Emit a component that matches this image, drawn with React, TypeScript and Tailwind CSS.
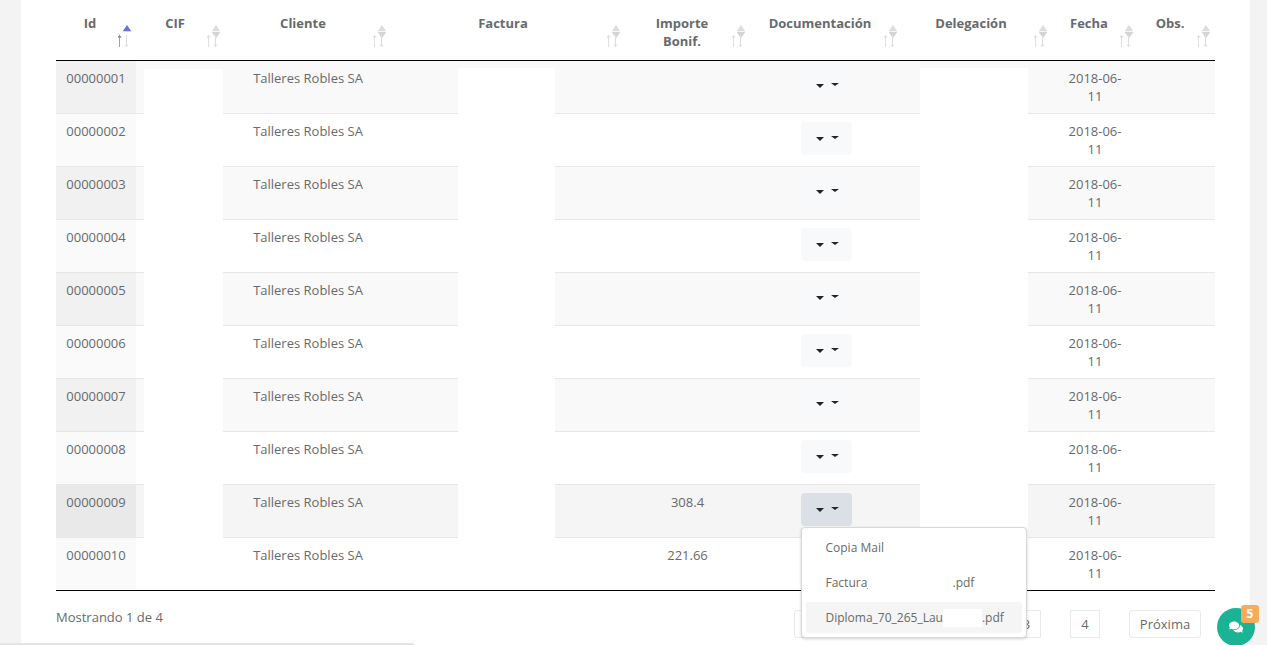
import React from "react";
import { FaComments } from "react-icons/fa";

const COLS = "grid-cols-[80px_89px_166px_234px_125px_152px_150px_86px_77px]";

function SortIcon({ active }: { active?: boolean }) {
  return (
    <svg width="14" height="24" viewBox="0 0 14 24" className="absolute right-[4px] top-[24px]">
      <path d="M4.7 7.2 L9 1 L13.3 7.2 Z" fill={active ? "#6a6fdc" : "#dcdcdc"} />
      {!active && <path d="M4.7 8 L13.3 8 L9 14.2 Z" fill="#d4d4d4" />}
      <path d="M1.5 23 V12" stroke={active ? "#a0a0a0" : "#e0e0e0"} strokeWidth="1" fill="none" />
      <path d="M0 13.7 L1.5 11.5 L3 13.7" stroke={active ? "#666" : "#d8d8d8"} strokeWidth="1" fill="none" />
      <path d="M8.5 11 V22.5 M7 20.5 L8.5 22.5 L10 20.5" stroke="#dedede" strokeWidth="1" fill="none" />
    </svg>
  );
}

const headers: { label: React.ReactNode; cls: string; active?: boolean }[] = [
  { label: "Id", cls: "pr-[12px]", active: true },
  { label: "CIF", cls: "pr-[11px]" },
  { label: "Cliente", cls: "pr-[10px]" },
  { label: "Factura", cls: "pr-[10px]" },
  { label: (<>Importe<br />Bonif.</>), cls: "pr-[11px]" },
  { label: "Documentación", cls: "pr-[12px]" },
  { label: "Delegación", cls: "pr-[12px]" },
  { label: "Fecha", cls: "pr-[12px]" },
  { label: "Obs.", cls: "pr-[13px]" },
];

const rows = [
  { id: "00000001", imp: "" },
  { id: "00000002", imp: "" },
  { id: "00000003", imp: "" },
  { id: "00000004", imp: "" },
  { id: "00000005", imp: "" },
  { id: "00000006", imp: "" },
  { id: "00000007", imp: "" },
  { id: "00000008", imp: "" },
  { id: "00000009", imp: "308.4" },
  { id: "00000010", imp: "221.66" },
];

function DocButton({ open }: { open?: boolean }) {
  return (
    <div
      className={
        "flex h-[33px] w-[51px] justify-center rounded-[4px] pl-[2px] pt-[14px] " +
        (open ? "bg-[#dae0e5]" : "bg-[#f8f9fa]")
      }
    >
      <span className="mr-[7px] mt-[1px] h-0 w-0 border-x-4 border-t-4 border-x-transparent border-t-[#212529]" />
      <span className="h-0 w-0 border-x-4 border-t-[3px] border-x-transparent border-t-[#212529]" />
    </div>
  );
}

function Menu() {
  return (
    <div className="absolute left-0 top-[34px] z-20 h-[111px] w-[226px] rounded-[4px] border border-[#d8d8d8] bg-white px-[4px] pt-[4px] text-[12px] shadow-[0_1px_3px_rgba(0,0,0,0.18)]">
      <div className="mb-1 flex h-[31px] items-center pl-[20px]">Copia Mail</div>
      <div className="mb-1 flex h-[31px] items-center pl-[20px]">
        <span className="w-[42px] overflow-hidden whitespace-nowrap">Factura_</span>
        <span className="w-[85px]" />
        <span>.pdf</span>
      </div>
      <div className="flex h-[31px] items-center rounded-[3px] bg-[#f5f5f5] pl-[20px]">
        <span>Diploma_70_265_Lau</span>
        <span className="h-[18px] w-[39px] bg-white" />
        <span>.pdf</span>
      </div>
    </div>
  );
}

export default function App() {
  return (
    <div
      className="relative h-[645px] w-[1267px] overflow-hidden bg-[#f3f3f4] text-[13px] leading-[18px] text-[#676a6c]"
      style={{ fontFamily: '"Open Sans", "Noto Sans", sans-serif' }}
    >
      <div className="ml-[21px] h-full w-[1229px] bg-white px-[35px]">
        <div className={"grid h-[61px] border-b border-black font-bold " + COLS}>
          {headers.map((h, i) => (
            <div key={i} className={"relative pt-[14px] text-center " + h.cls}>
              {h.label}
              <SortIcon active={h.active} />
            </div>
          ))}
        </div>

        <div className="relative">
          {rows.map((r, i) => {
            const hover = i === 8;
            const odd = i % 2 === 0;
            const rowBg = hover ? "bg-[#f5f5f5]" : odd ? "bg-[#f9f9f9]" : "bg-white";
            const idBg = hover ? "bg-[#e9e9e9]" : odd ? "bg-[#f1f1f1]" : "bg-[#fafafa]";
            const border = i === 9 ? "border-black" : "border-[#e7e7e7]";
            return (
              <div key={r.id} className={"grid h-[53px] border-b " + border + " " + rowBg + " " + COLS}>
                <div className={"pt-2 text-center " + idBg}>{r.id}</div>
                <div />
                <div className="whitespace-nowrap pt-2 text-center">Talleres Robles SA</div>
                <div />
                <div className="pt-2 text-center">{r.imp}</div>
                <div className="relative flex justify-center pt-2">
                  <div className="relative">
                    <DocButton open={hover} />
                    {hover && <Menu />}
                  </div>
                </div>
                <div />
                <div className="px-[14px] pt-2 text-center">2018-06-11</div>
                <div />
              </div>
            );
          })}
          {/* redacted areas lying over the table */}
          <div className="absolute bottom-[1px] left-[88px] top-[8px] z-10 w-[79px] bg-white" />
          <div className="absolute bottom-[1px] left-[402px] top-[7px] z-10 w-[97px] bg-white" />
          <div className="absolute bottom-[1px] left-[864px] top-[7px] z-10 w-[108px] bg-white" />
        </div>

        <div className="flex items-start justify-between pt-[19px]">
          <div className="-mt-[2px]">Mostrando 1 de 4</div>
          <div className="flex gap-[29px] pr-[14px]">
            <div className="flex h-[28px] w-[72px] items-center justify-center rounded-[3px] border border-[#e7eaec]">Anterior</div>
            <div className="flex h-[28px] w-[29px] items-center justify-center border border-[#1ab394] bg-[#1ab394] text-white">1</div>
            <div className="flex h-[28px] w-[30px] items-center justify-center border border-[#e7eaec]">2</div>
            <div className="flex h-[28px] w-[29px] items-center justify-center border border-[#e7eaec]">3</div>
            <div className="flex h-[28px] w-[30px] items-center justify-center border border-[#e7eaec]">4</div>
            <div className="flex h-[28px] w-[72px] items-center justify-center rounded-[3px] border border-[#e7eaec]">Próxima</div>
          </div>
        </div>
      </div>

      <div className="absolute bottom-0 left-0 h-[2px] w-[414px] bg-[#e4e4e4]" />

      <div className="absolute left-[1217px] top-[608px] z-30 flex h-[38px] w-[38px] items-center justify-center rounded-full bg-[#1ab394] text-white">
        <FaComments size={14} />
      </div>
      <div className="absolute left-[1241px] top-[605px] z-30 flex h-[18px] w-[18px] items-center justify-center rounded-[3px] bg-[#f8ac59] text-[12px] font-bold text-white">
        5
      </div>
    </div>
  );
}
